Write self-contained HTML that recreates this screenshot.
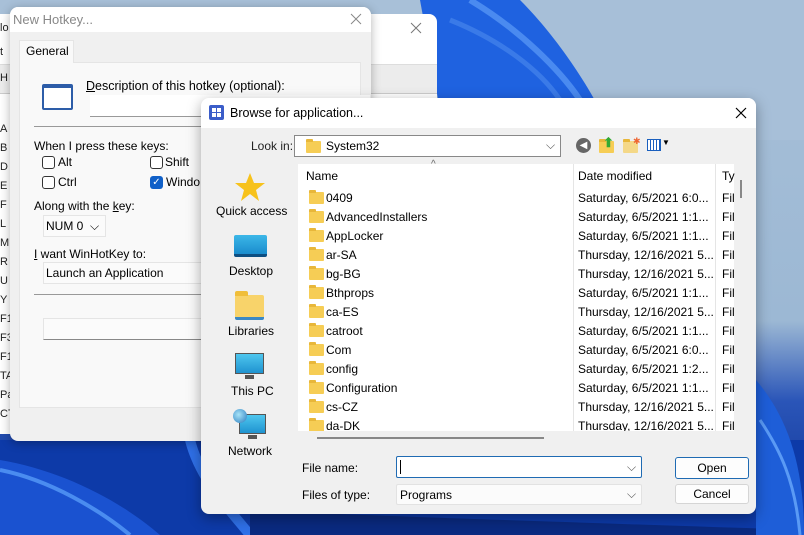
<!DOCTYPE html>
<html><head><meta charset="utf-8"><style>
*{margin:0;padding:0;box-sizing:border-box}
body{width:804px;height:535px;overflow:hidden;position:relative;font-family:"Liberation Sans",sans-serif;font-size:12px;color:#000;
background:linear-gradient(180deg,#a8c0d8 0%,#9cb8d4 60%,#2a55b8 75%,#0c2f8f 100%)}
.a{position:absolute}
.t{position:absolute;white-space:nowrap}
.fold{position:absolute;width:15px;height:12px;background:#f6cd55;border-radius:1px}
.fold:before{content:"";position:absolute;left:0;top:-2px;width:7px;height:3px;background:#e8b73a;border-radius:1px 1px 0 0}
.row .t{font-size:12px}
</style></head><body>
<svg class="a" style="left:0;top:0" width="804" height="535">
<path d="M430 0 C520 40 580 100 600 140 L804 140 L804 0 Z" fill="#a7bfd8"/>
<path d="M420 0 L520 0 C560 40 590 90 600 110 L440 110 Z" fill="#1f62e0"/>
<path d="M470 0 C520 30 560 70 580 100" stroke="#4a8af0" stroke-width="6" fill="none"/>
<path d="M450 20 C500 40 540 70 560 100" stroke="#3a7ae8" stroke-width="5" fill="none"/>
<path d="M0 440 L804 440 L804 535 L0 535 Z" fill="#0d3aa8"/>
<path d="M0 460 C60 470 120 500 160 535 L0 535Z" fill="#1a52d0"/>
<path d="M0 470 C50 480 100 510 130 535" stroke="#4a8cf0" stroke-width="4" fill="none"/>
<path d="M190 440 C200 480 230 510 250 535" stroke="#2f70e8" stroke-width="10" fill="none"/>
<path d="M250 510 C350 515 500 520 804 530 L804 535 L250 535Z" fill="#0a2a80"/>
<path d="M756 380 C790 420 804 470 804 535 L756 535Z" fill="#1e5ed8"/>
<path d="M760 420 C780 450 795 480 800 535" stroke="#5a9af5" stroke-width="3" fill="none"/>
</svg>
<div class="a" style="left:0;top:14px;width:437px;height:420px;background:#fff;border-radius:0 8px 0 0"></div>
<div class="a" style="left:0;top:64px;width:437px;height:30px;background:#ececec;border-top:1px solid #ddd;border-bottom:1px solid #ccc"></div>
<svg class="a" style="left:410px;top:22px" width="12" height="12"><path d="M1 1L11 11M11 1L1 11" stroke="#777" stroke-width="1"/></svg>
<div class="a" style="left:0;top:14px;width:12px;height:414px;font-size:11px;color:#222;line-height:19px">
<div class="t" style="top:5px">lo</div><div class="t" style="top:29px">t</div><div class="t" style="top:55px">H</div>
<div class="t" style="top:106px">A</div><div class="t" style="top:125px">B</div><div class="t" style="top:144px">D</div><div class="t" style="top:163px">E</div><div class="t" style="top:182px">F</div><div class="t" style="top:201px">L</div><div class="t" style="top:220px">M</div><div class="t" style="top:239px">R</div><div class="t" style="top:258px">U</div><div class="t" style="top:277px">Y</div><div class="t" style="top:296px">F1</div><div class="t" style="top:315px">F3</div><div class="t" style="top:334px">F1</div><div class="t" style="top:353px">TA</div><div class="t" style="top:372px">Pa</div><div class="t" style="top:391px">CT</div>
</div>
<div class="a" style="left:10px;top:7px;width:361px;height:434px;background:#f0f0f0;border-radius:8px;box-shadow:0 2px 10px rgba(0,0,0,.3);overflow:hidden">
<div class="a" style="left:0;top:0;width:361px;height:25px;background:#fff"></div>
<div class="t" style="left:3px;top:5px;font-size:13px;color:#888">New Hotkey...</div>
<svg class="a" style="left:340px;top:6px" width="12" height="12"><path d="M1 1L11 11M11 1L1 11" stroke="#888" stroke-width="1"/></svg>
<div class="a" style="left:9px;top:55px;width:342px;height:346px;background:#f9f9f9;border:1px solid #e5e5e5"></div>
<div class="a" style="left:9px;top:33px;width:55px;height:23px;background:#f9f9f9;border:1px solid #e5e5e5;border-bottom:none"></div>
<div class="t" style="left:16px;top:37px">General</div>
<div class="a" style="left:32px;top:77px;width:31px;height:26px;border:2px solid #2d5da8;border-top-width:4px;background:#fff;border-radius:2px"></div>
<div class="t" style="left:76px;top:72px;font-size:12.5px"><u>D</u>escription of this hotkey (optional):</div>
<div class="a" style="left:80px;top:88px;width:280px;height:22px;background:#fff;border-bottom:1px solid #999"></div>
<div class="a" style="left:24px;top:119px;width:340px;height:1px;background:#999"></div>
<div class="t" style="left:24px;top:132px">When I press these keys:</div>
<div class="a" style="left:32px;top:149px;width:13px;height:13px;border:1px solid #333;border-radius:3px;background:#fff"></div><div class="t" style="left:48px;top:148px">Alt</div>
<div class="a" style="left:140px;top:149px;width:13px;height:13px;border:1px solid #333;border-radius:3px;background:#fff"></div><div class="t" style="left:155px;top:148px">Shift</div>
<div class="a" style="left:32px;top:169px;width:13px;height:13px;border:1px solid #333;border-radius:3px;background:#fff"></div><div class="t" style="left:48px;top:168px">Ctrl</div>
<div class="a" style="left:140px;top:169px;width:13px;height:13px;border-radius:3px;background:#1060c8;color:#fff;font-size:10px;line-height:13px;text-align:center">✓</div><div class="t" style="left:156px;top:168px">Windo</div>
<div class="t" style="left:24px;top:192px">Along with the <u>k</u>ey:</div>
<div class="a" style="left:33px;top:208px;width:63px;height:22px;background:#fbfbfb;border:1px solid #e5e5e5"></div>
<div class="t" style="left:36px;top:212px">NUM 0 &nbsp;⌵</div>
<div class="t" style="left:24px;top:240px"><u>I</u> want WinHotKey to:</div>
<div class="a" style="left:33px;top:255px;width:330px;height:22px;background:#fbfbfb;border:1px solid #e5e5e5"></div>
<div class="t" style="left:36px;top:259px">Launch an Application</div>
<div class="a" style="left:24px;top:287px;width:340px;height:1px;background:#999"></div>
<div class="a" style="left:33px;top:311px;width:330px;height:22px;background:#fbfbfb;border:1px solid #e5e5e5;border-bottom:1px solid #888"></div>
</div>
<div class="a" style="left:201px;top:98px;width:555px;height:416px;background:#f0f0f0;border-radius:8px;box-shadow:0 4px 14px rgba(0,0,0,.35);overflow:hidden">
<div class="a" style="left:0;top:0;width:555px;height:30px;background:#fff"></div>
<svg class="a" style="left:7px;top:6px" width="17" height="17"><rect x="1" y="1" width="15" height="15" rx="2" fill="#3b5dc9"/><path d="M4 4h4v4h-4zM9 4h4v4h-4zM4 9h4v4h-4zM9 9h4v4h-4z" fill="#fff"/></svg>
<div class="t" style="left:29px;top:8px;font-size:12.5px">Browse for application...</div>
<svg class="a" style="left:534px;top:9px" width="12" height="12"><path d="M1 1L11 11M11 1L1 11" stroke="#000" stroke-width="1.2"/></svg>
<div class="t" style="left:50px;top:41px;color:#222">Look in:</div>
<div class="a" style="left:93px;top:37px;width:267px;height:22px;background:#fff;border:1px solid #888"></div>
<div class="fold" style="left:105px;top:43px"></div>
<div class="t" style="left:125px;top:41px">System32</div>
<div class="t" style="left:345px;top:40px;color:#555">⌵</div>
<div class="a" style="left:375px;top:40px;width:15px;height:15px;border-radius:50%;background:#666;color:#fff;font-size:10px;line-height:15px;text-align:center">◀</div>
<div class="fold" style="left:398px;top:43px"></div><div class="t" style="left:402px;top:37px;color:#3a3;font-weight:bold;font-size:13px">⬆</div>
<div class="fold" style="left:422px;top:43px;background:#f4d888"></div><div class="t" style="left:432px;top:38px;color:#e63;font-size:9px">✱</div>
<div class="a" style="left:446px;top:41px;width:14px;height:12px;border:1px solid #1a5fbe;background:repeating-linear-gradient(90deg,#fff 0 2px,#1a5fbe 2px 3px)"></div><div class="t" style="left:461px;top:40px;font-size:8px">▼</div>
<svg class="a" style="left:33px;top:74px" width="32" height="30"><path d="M16 1 L20 11 L31 11 L22 18 L25 29 L16 22 L7 29 L10 18 L1 11 L12 11Z" fill="#f7c21b"/></svg>
<div class="t" style="left:15px;top:106px">Quick access</div>
<div class="a" style="left:33px;top:137px;width:33px;height:22px;background:linear-gradient(#3cb7e8,#1a8ccd);border-radius:2px;border-bottom:3px solid #0d4f82"></div>
<div class="t" style="left:28px;top:166px">Desktop</div>
<div class="a" style="left:34px;top:197px;width:29px;height:25px;background:#f8d36a;border-radius:2px;border-bottom:3px solid #3b88c4"></div>
<div class="a" style="left:34px;top:193px;width:13px;height:5px;background:#f0be3a;border-radius:2px 2px 0 0"></div>
<div class="t" style="left:27px;top:226px">Libraries</div>
<div class="a" style="left:34px;top:255px;width:29px;height:21px;background:linear-gradient(#4ec6ee,#1f93d0);border:1px solid #555"></div>
<div class="a" style="left:44px;top:277px;width:9px;height:4px;background:#555"></div>
<div class="t" style="left:30px;top:286px">This PC</div>
<div class="a" style="left:38px;top:316px;width:27px;height:20px;background:linear-gradient(#4ec6ee,#1f93d0);border:1px solid #555"></div>
<div class="a" style="left:32px;top:311px;width:14px;height:14px;border-radius:50%;background:radial-gradient(circle at 40% 40%,#a7e3f7,#2a7cc0)"></div>
<div class="a" style="left:47px;top:337px;width:9px;height:4px;background:#555"></div>
<div class="t" style="left:27px;top:346px">Network</div>
<div class="a" style="left:97px;top:66px;width:436px;height:267px;background:#fff"></div>
<div class="a" style="left:372px;top:66px;width:1px;height:267px;background:#e5e5e5"></div>
<div class="a" style="left:514px;top:66px;width:1px;height:267px;background:#e5e5e5"></div>
<div class="t" style="left:230px;top:61px;font-size:10px;color:#666">^</div>
<div class="t" style="left:105px;top:71px">Name</div>
<div class="t" style="left:377px;top:71px">Date modified</div>
<div class="t" style="left:521px;top:71px">Ty</div>
<div class="a" style="left:539px;top:82px;width:2px;height:18px;background:#888"></div>
<div class="row">
<div class="fold" style="left:108px;top:94px"></div><div class="t" style="left:125px;top:93px">0409</div><div class="t" style="left:377px;top:93px">Saturday, 6/5/2021 6:0...</div><div class="t" style="left:521px;top:93px">Fil</div>
<div class="fold" style="left:108px;top:113px"></div><div class="t" style="left:125px;top:112px">AdvancedInstallers</div><div class="t" style="left:377px;top:112px">Saturday, 6/5/2021 1:1...</div><div class="t" style="left:521px;top:112px">Fil</div>
<div class="fold" style="left:108px;top:132px"></div><div class="t" style="left:125px;top:131px">AppLocker</div><div class="t" style="left:377px;top:131px">Saturday, 6/5/2021 1:1...</div><div class="t" style="left:521px;top:131px">Fil</div>
<div class="fold" style="left:108px;top:151px"></div><div class="t" style="left:125px;top:150px">ar-SA</div><div class="t" style="left:377px;top:150px">Thursday, 12/16/2021 5...</div><div class="t" style="left:521px;top:150px">Fil</div>
<div class="fold" style="left:108px;top:170px"></div><div class="t" style="left:125px;top:169px">bg-BG</div><div class="t" style="left:377px;top:169px">Thursday, 12/16/2021 5...</div><div class="t" style="left:521px;top:169px">Fil</div>
<div class="fold" style="left:108px;top:189px"></div><div class="t" style="left:125px;top:188px">Bthprops</div><div class="t" style="left:377px;top:188px">Saturday, 6/5/2021 1:1...</div><div class="t" style="left:521px;top:188px">Fil</div>
<div class="fold" style="left:108px;top:208px"></div><div class="t" style="left:125px;top:207px">ca-ES</div><div class="t" style="left:377px;top:207px">Thursday, 12/16/2021 5...</div><div class="t" style="left:521px;top:207px">Fil</div>
<div class="fold" style="left:108px;top:227px"></div><div class="t" style="left:125px;top:226px">catroot</div><div class="t" style="left:377px;top:226px">Saturday, 6/5/2021 1:1...</div><div class="t" style="left:521px;top:226px">Fil</div>
<div class="fold" style="left:108px;top:246px"></div><div class="t" style="left:125px;top:245px">Com</div><div class="t" style="left:377px;top:245px">Saturday, 6/5/2021 6:0...</div><div class="t" style="left:521px;top:245px">Fil</div>
<div class="fold" style="left:108px;top:265px"></div><div class="t" style="left:125px;top:264px">config</div><div class="t" style="left:377px;top:264px">Saturday, 6/5/2021 1:2...</div><div class="t" style="left:521px;top:264px">Fil</div>
<div class="fold" style="left:108px;top:284px"></div><div class="t" style="left:125px;top:283px">Configuration</div><div class="t" style="left:377px;top:283px">Saturday, 6/5/2021 1:1...</div><div class="t" style="left:521px;top:283px">Fil</div>
<div class="fold" style="left:108px;top:303px"></div><div class="t" style="left:125px;top:302px">cs-CZ</div><div class="t" style="left:377px;top:302px">Thursday, 12/16/2021 5...</div><div class="t" style="left:521px;top:302px">Fil</div>
<div class="fold" style="left:108px;top:322px"></div><div class="t" style="left:125px;top:321px">da-DK</div><div class="t" style="left:377px;top:321px">Thursday, 12/16/2021 5...</div><div class="t" style="left:521px;top:321px">Fil</div>
</div>
<div class="a" style="left:97px;top:333px;width:436px;height:10px;background:#f0f0f0"></div>
<div class="a" style="left:116px;top:339px;width:227px;height:2px;background:#888"></div>
<div class="t" style="left:101px;top:363px">File name:</div>
<div class="a" style="left:195px;top:358px;width:246px;height:22px;background:#fff;border:1px solid #1f6bb3;border-radius:2px"></div>
<div class="a" style="left:199px;top:362px;width:1px;height:14px;background:#000"></div>
<div class="t" style="left:426px;top:362px;color:#555">⌵</div>
<div class="a" style="left:474px;top:359px;width:74px;height:22px;background:#fdfdfd;border:1px solid #1f6bb3;border-radius:3px;text-align:center;line-height:20px">Open</div>
<div class="t" style="left:101px;top:390px">Files of type:</div>
<div class="a" style="left:195px;top:386px;width:246px;height:21px;background:#fbfbfb;border:1px solid #e2e2e2;border-radius:2px"></div>
<div class="t" style="left:199px;top:390px">Programs</div>
<div class="t" style="left:426px;top:389px;color:#555">⌵</div>
<div class="a" style="left:474px;top:386px;width:74px;height:20px;background:#fdfdfd;border:1px solid #d5d5d5;border-radius:3px;text-align:center;line-height:18px">Cancel</div>
</div>
</body></html>
